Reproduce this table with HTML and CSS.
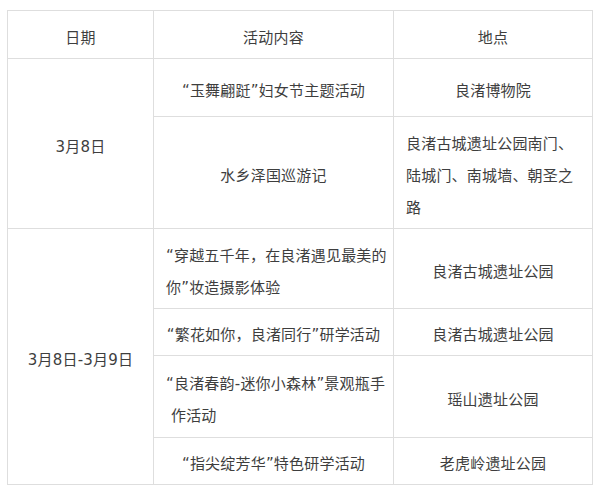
FILE: index.html
```html
<!DOCTYPE html>
<html lang="zh-CN">
<head>
<meta charset="utf-8">
<link rel="stylesheet" href="styles.css">
</head>
<body>
<table class="schedule">
  <colgroup>
    <col class="c-date">
    <col class="c-act">
    <col class="c-place">
  </colgroup>
  <thead>
    <tr class="h-head">
      <th>日期</th>
      <th>活动内容</th>
      <th>地点</th>
    </tr>
  </thead>
  <tbody>
    <tr class="h-r1">
      <td rowspan="2">3月8日</td>
      <td>“玉舞翩跹”妇女节主题活动</td>
      <td>良渚博物院</td>
    </tr>
    <tr class="h-r2">
      <td>水乡泽国巡游记</td>
      <td class="wrap">良渚古城遗址公园南门、<br>陆城门、南城墙、朝圣之<br>路</td>
    </tr>
    <tr class="h-r3">
      <td rowspan="4">3月8日-3月9日</td>
      <td class="wrap">“穿越五千年，在良渚遇见最美的<br>你”妆造摄影体验</td>
      <td>良渚古城遗址公园</td>
    </tr>
    <tr class="h-r4">
      <td>“繁花如你，良渚同行”研学活动</td>
      <td>良渚古城遗址公园</td>
    </tr>
    <tr class="h-r5">
      <td class="wrap">“良渚春韵-迷你小森林”景观瓶手<br>&nbsp;作活动</td>
      <td>瑶山遗址公园</td>
    </tr>
    <tr class="h-r6">
      <td>“指尖绽芳华”特色研学活动</td>
      <td>老虎岭遗址公园</td>
    </tr>
  </tbody>
</table>
</body>
</html>
```
FILE: styles.css
```css
html, body {
  margin: 0;
  padding: 0;
  background: #ffffff;
}
body {
  padding: 10px 0 0 7px;
  font-family: "DejaVu Sans", "Noto Sans CJK SC", sans-serif;
  font-size: 15px;
  letter-spacing: 0.2px;
  color: #3e3e3e;
}
.schedule {
  border-collapse: collapse;
  table-layout: fixed;
  width: 585px;
}
.c-date { width: 146px; }
.c-act { width: 240px; }
.c-place { width: 199px; }
.schedule th,
.schedule td {
  border: 1px solid #dedede;
  padding: 6px 12px 0 12px;
  line-height: 32px;
  text-align: center;
  vertical-align: middle;
  font-weight: normal;
  white-space: nowrap;
  box-sizing: border-box;
}
.schedule td.wrap {
  text-align: left;
}
.h-head { height: 48px; }
.h-r1 { height: 58px; }
.h-r2 { height: 112px; }
.h-r3 { height: 80px; }
.h-r4 { height: 47px; }
.h-r5 { height: 82px; }
.h-r6 { height: 47px; }
```
